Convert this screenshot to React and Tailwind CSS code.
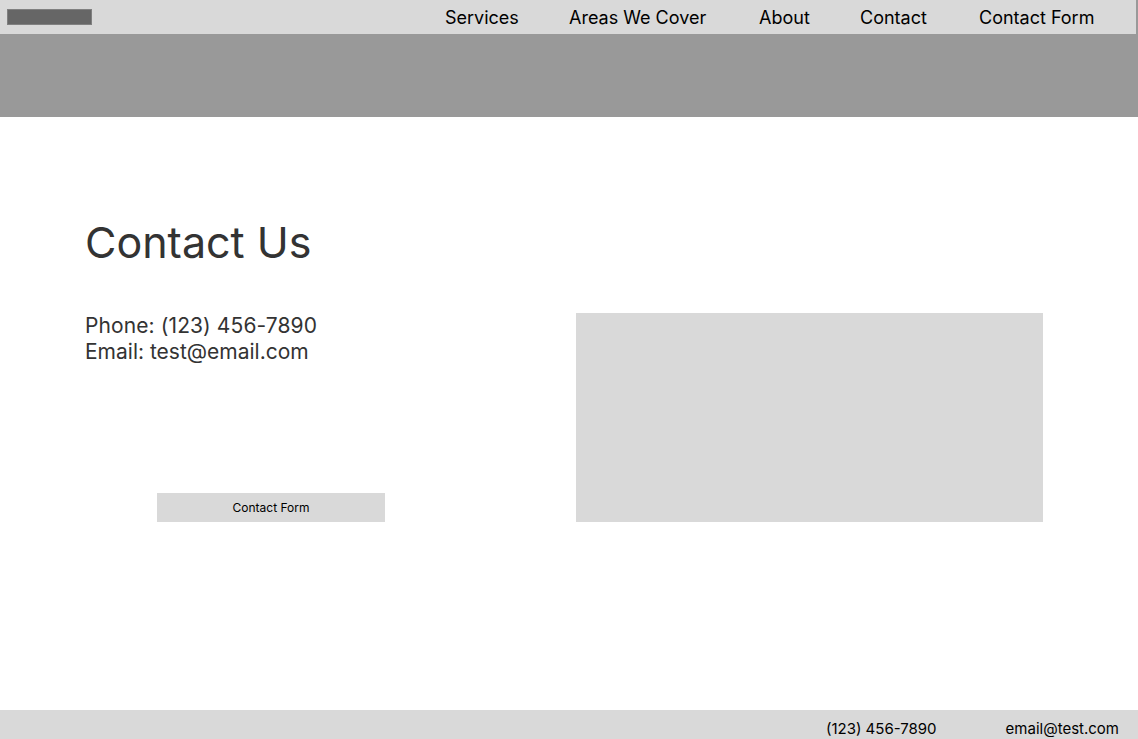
export default function App() {
  const navItems = [
    { label: 'Services', cls: 'w-[124px]' },
    { label: 'Areas We Cover', cls: 'w-[190px]' },
    { label: 'About', cls: 'w-[101px]' },
    { label: 'Contact', cls: 'w-[119px]' },
    { label: 'Contact Form', cls: 'w-[120px]' },
  ]

  return (
    <div className="flex h-[739px] w-[1138px] flex-col overflow-hidden bg-white font-['Inter','Liberation_Sans',sans-serif]">
      {/* Top nav */}
      <div className="bg-[#999999]">
        <header className="flex h-[34px] w-[1136px] items-center bg-[#d9d9d9]">
          <div className="ml-[7px] h-[16px] w-[85px] border border-[#808080] bg-[#666666]" />
          <nav className="ml-[353px] flex items-center text-[18px] text-black">
            {navItems.map(item => (
              <span key={item.label} className={`${item.cls} whitespace-nowrap`}>
                {item.label}
              </span>
            ))}
          </nav>
        </header>
      </div>

      {/* Hero band */}
      <div className="h-[83px] bg-[#999999]" />

      {/* Main */}
      <main className="flex flex-1 flex-col pl-[85px] pt-[98px]">
        <h1 className="text-[43px] leading-[54px] font-normal text-[#333333]">Contact Us</h1>
        <div className="mt-[44px] flex">
          <div className="flex w-[491px] flex-col">
            <p className="text-[21px] leading-[26px] tracking-[0.1px] text-[#333333]">Phone: (123) 456-7890</p>
            <p className="text-[21px] leading-[26px] text-[#333333]">Email: test@email.com</p>
            <button
              type="button"
              className="ml-[72px] mt-[128px] flex h-[29px] w-[228px] items-center justify-center bg-[#d9d9d9] text-[12px] text-black"
            >
              Contact Form
            </button>
          </div>
          <div className="h-[209px] w-[467px] bg-[#d9d9d9]" />
        </div>
      </main>

      {/* Footer */}
      <footer className="flex h-[29px] items-center justify-end bg-[#d9d9d9] pr-[19px] pt-[9px] text-[15px] text-black">
        <span>(123) 456-7890</span>
        <span className="ml-[69px]">email@test.com</span>
      </footer>
    </div>
  )
}
